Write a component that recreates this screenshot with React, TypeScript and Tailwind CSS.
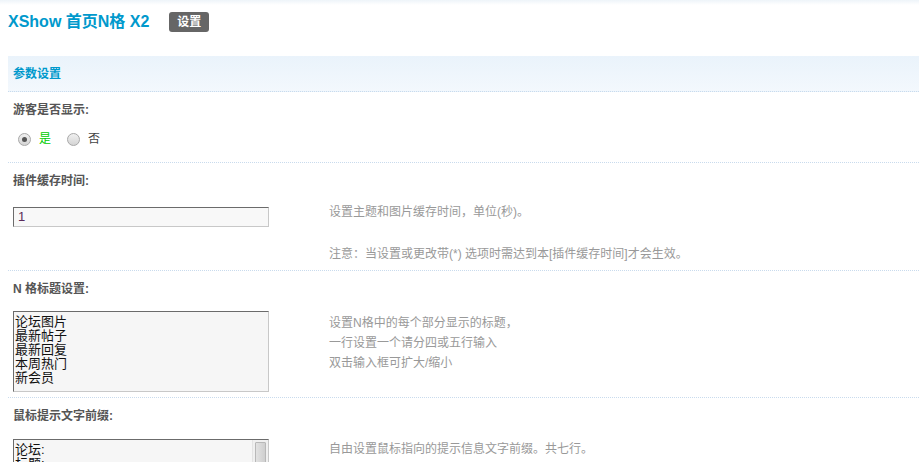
import React from 'react';

const font = "font-['Liberation_Sans','Noto_Sans_CJK_SC',sans-serif]";

const Radio = ({ checked }: { checked?: boolean }) => (
  <span className="flex items-center justify-center w-[13px] h-[13px] rounded-full border border-[#a8a8a8] bg-gradient-to-b from-[#f0f0f0] to-[#d4d4d4]">
    {checked && <span className="w-[5px] h-[5px] rounded-full bg-[#555]" />}
  </span>
);

const Label = ({ children }: { children: React.ReactNode }) => (
  <div className="pt-[8px] leading-[20px] text-xs font-bold text-[#555]">{children}</div>
);

// 每一行设置项
const Row = ({ children, className = '' }: { children: React.ReactNode; className?: string }) => (
  <div className={`px-[5px] border-b border-dotted border-[#c9dbed] ${className}`}>{children}</div>
);

export default function App() {
  return (
    <div className={`min-h-screen bg-white ${font}`}>
      <div className="h-[5px] bg-gradient-to-b from-[#eef4f9] to-white" />
      <div className="pl-[8px]">
        <div className="flex items-center h-[34px]">
          <h3 className="text-[16px] font-bold text-[#0099cc] leading-none">XShow 首页N格 X2</h3>
          <span className="ml-[20px] h-[20px] px-[8px] flex items-center rounded-[3px] bg-[#666] text-white text-xs font-bold">设置</span>
        </div>

        <div className="mt-[17px] h-[36px] flex items-center px-[5px] bg-gradient-to-b from-[#eaf3fb] to-[#f3f8fd] border-b border-dotted border-[#c9dbed]">
          <span className="text-xs font-bold text-[#0099cc]">参数设置</span>
        </div>

        <Row className="pb-[13px]">
          <Label>游客是否显示:</Label>
          <div className="mt-[9px] h-[20px] flex items-center pl-[5px] text-xs">
            <Radio checked />
            <span className="ml-[8px] text-[#00cc00]">是</span>
            <span className="ml-[16px]"><Radio /></span>
            <span className="ml-[8px] text-[#444]">否</span>
          </div>
        </Row>

        <Row className="pb-[6px]">
          <Label>插件缓存时间:</Label>
          <div className="mt-[13px] flex items-start">
            <div className="w-[316px] shrink-0">
              <input
                defaultValue="1"
                className="w-[256px] h-[20px] px-[4px] bg-[#f8f8f8] border border-t-[#6b6b6b] border-l-[#6b6b6b] border-r-[#c8c8c8] border-b-[#c8c8c8] text-[13px] text-[#5a2a5a] outline-none"
              />
            </div>
            <div className="-mt-[2px] text-xs leading-[20px] text-[#999]">
              <div>设置主题和图片缓存时间，单位(秒)。</div>
              <div className="mt-[22px]">注意：当设置或更改带(*) 选项时需达到本[插件缓存时间]才会生效。</div>
            </div>
          </div>
        </Row>

        <Row className="pb-[5px]">
          <Label>N 格标题设置:</Label>
          <div className="mt-[12px] flex items-start">
            <div className="w-[316px] shrink-0">
              <textarea
                defaultValue={'论坛图片\n最新帖子\n最新回复\n本周热门\n新会员'}
                className="block w-[256px] h-[81px] pt-[3px] pl-[1px] resize-none bg-[#f6f6f6] border border-t-[#6b6b6b] border-l-[#6b6b6b] border-r-[#c8c8c8] border-b-[#c8c8c8] text-[13px] leading-[14px] text-[#111] outline-none overflow-hidden"
              />
            </div>
            <div className="mt-[2px] text-xs leading-[20px] text-[#999]">
              <div>设置N格中的每个部分显示的标题，</div>
              <div>一行设置一个请分四或五行输入</div>
              <div>双击输入框可扩大/缩小</div>
            </div>
          </div>
        </Row>

        <div className="px-[5px]">
          <Label>鼠标提示文字前缀:</Label>
          <div className="mt-[13px] flex items-start">
            <div className="w-[316px] shrink-0">
              <div className="relative w-[256px]">
                <textarea
                  defaultValue={'论坛:\n标题:\n作者:\n发表时间:\n查看/回复:\n最后回复:\n最后发表:'}
                  className="block w-[256px] h-[81px] pt-[3px] pl-[1px] pr-[18px] resize-none bg-[#f6f6f6] border border-t-[#6b6b6b] border-l-[#6b6b6b] border-r-[#c8c8c8] border-b-[#c8c8c8] text-[13px] leading-[14px] text-[#111] outline-none overflow-hidden"
                />
                {/* 滚动条 */}
                <div className="absolute top-[1px] right-[1px] bottom-[1px] w-[16px] bg-[#f0f0f0] border-l border-[#e4e4e4] p-[2px]">
                  <div className="h-[40px] rounded-[1px] border border-[#b8b8b8] bg-gradient-to-r from-[#e2e2e2] to-[#cfcfcf]" />
                </div>
              </div>
            </div>
            <div className="text-xs leading-[20px] text-[#999]">自由设置鼠标指向的提示信息文字前缀。共七行。</div>
          </div>
        </div>
      </div>
    </div>
  );
}
